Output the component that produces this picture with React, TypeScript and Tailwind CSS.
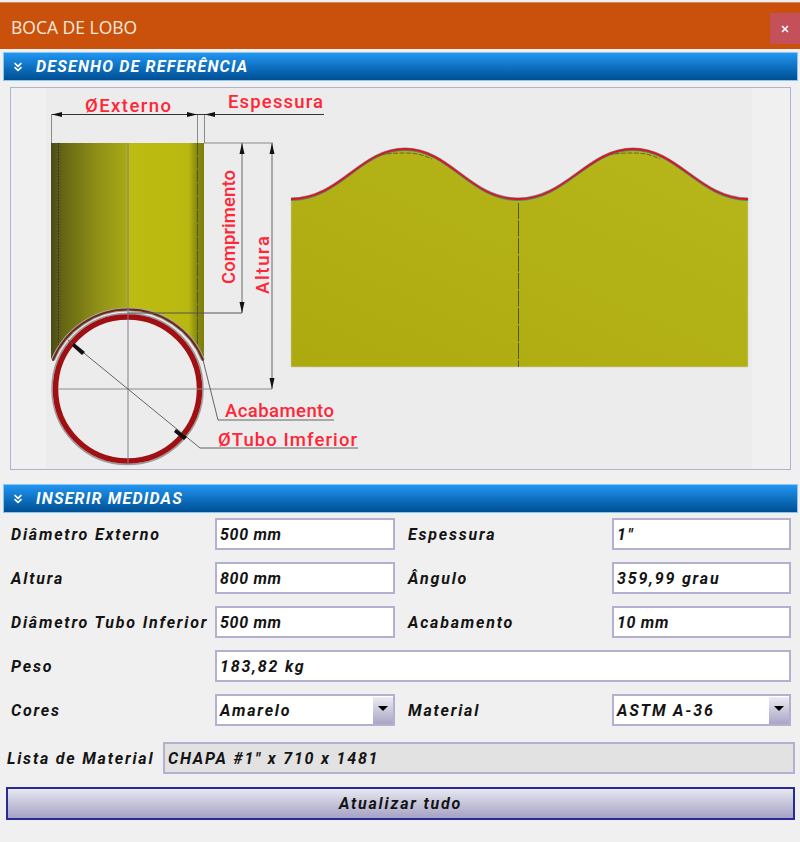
import { ChevronsDown, X } from 'lucide-react'

const labelClass =
  "font-['Roboto',sans-serif] italic font-bold text-[16px] leading-[20px] pt-[1px] tracking-[1.8px] text-[#141414] whitespace-nowrap"
const inputClass =
  "h-[32px] border-2 border-[#b4b0cf] pl-[3px] pt-[1px] flex items-center font-['Roboto',sans-serif] italic font-bold text-[16px] tracking-[1.8px] text-[#141414] whitespace-nowrap"

function SectionHeader({ title }: { title: string }) {
  return (
    <div className="mx-[3px] w-[795px] h-[29px] flex items-center border border-[#8fc4ee] bg-gradient-to-b from-[#2196f3] to-[#004f94]">
      <ChevronsDown size={14} strokeWidth={3} className="ml-[7px] text-white" />
      <span className="ml-[11px] pt-[1px] font-['Roboto',sans-serif] italic font-bold text-[16px] tracking-[1.2px] text-white whitespace-nowrap">
        {title}
      </span>
    </div>
  )
}

function Field({
  label,
  value,
  width,
  tight
}: {
  label: string
  value: string
  width: number
  tight?: boolean
}) {
  return (
    <div className="flex items-center">
      <span className={`${labelClass} w-[204px]`}>{label}</span>
      <div className={`${inputClass} bg-white`} style={{ width }}>
        <span className={tight ? 'tracking-[0.7px]' : ''}>{value}</span>
      </div>
    </div>
  )
}

function Select({ label, value, width }: { label: string; value: string; width: number }) {
  return (
    <div className="flex items-center">
      <span className={`${labelClass} w-[204px]`}>{label}</span>
      <div className={`${inputClass} bg-white justify-between pt-0`} style={{ width }}>
        <span className="pt-[1px]">{value}</span>
        <div className="w-[20px] h-full flex items-center justify-center bg-gradient-to-b from-[#ececf2] to-[#a9a6c6]">
          <div className="w-0 h-0 mb-[4px] border-x-[5px] border-x-transparent border-t-[5px] border-t-black" />
        </div>
      </div>
    </div>
  )
}

function ArrowHead({ x, y, dir }: { x: number; y: number; dir: 'l' | 'r' | 'u' | 'd' }) {
  const pts = {
    l: `${x},${y} ${x + 10},${y - 2.5} ${x + 10},${y + 2.5}`,
    r: `${x},${y} ${x - 10},${y - 2.5} ${x - 10},${y + 2.5}`,
    u: `${x},${y} ${x - 2.5},${y + 11} ${x + 2.5},${y + 11}`,
    d: `${x},${y} ${x - 2.5},${y - 11} ${x + 2.5},${y - 11}`
  }
  return <polygon points={pts[dir]} fill="#111" />
}

// Technical drawing, coordinates follow the page so they are easy to compare
function Drawing() {
  const wave =
    'M291 199 C340 199 360 149 405 149 C450 149 470 199 518 199 C566 199 588 149 633 149 C678 149 700 199 748 199'
  const red = { fontFamily: 'Roboto, sans-serif', fontWeight: 500, fill: '#ff2638', fontSize: 18.5, lengthAdjust: 'spacing' }
  return (
    <svg width={779} height={381} viewBox="11 88 779 381" className="block">
      <defs>
        <linearGradient id="cyl" x1="0" x2="1" y1="0" y2="0">
          <stop offset="0" stopColor="#4a4a18" />
          <stop offset="0.08" stopColor="#666614" />
          <stop offset="0.3" stopColor="#8f8f18" />
          <stop offset="0.49" stopColor="#a8a816" />
          <stop offset="0.5" stopColor="#bcbc12" />
          <stop offset="0.9" stopColor="#b8b810" />
          <stop offset="0.95" stopColor="#8a8a10" />
          <stop offset="1" stopColor="#7e7e10" />
        </linearGradient>
        <linearGradient id="sheet" x1="0" x2="1" y1="1" y2="0">
          <stop offset="0" stopColor="#acaa0e" />
          <stop offset="1" stopColor="#b7b61a" />
        </linearGradient>
      </defs>
      <rect x={11} y={88} width={779} height={381} fill="#f0f0f0" />
      <rect x={46} y={88} width={706} height={381} fill="#ececec" />

      {/* developed sheet */}
      <path d={`${wave} V367 H291 Z`} fill="url(#sheet)" stroke="#cfcfc0" strokeWidth={0.6} />
      <path d={wave} fill="none" stroke="#3f9a7a" strokeWidth={1} transform="translate(0 1.5)" />
      <path
        d="M380 155 C392 153 398 153 405 153 C414 153 422 154 432 159 M608 155 C620 153 626 153 633 153 C642 153 650 154 660 159"
        fill="none"
        stroke="#55551a"
        strokeWidth={0.8}
        strokeDasharray="5 1.5"
      />
      <path d={wave} fill="none" stroke="#666" strokeWidth={3} opacity={0.7} />
      <path d={wave} fill="none" stroke="#dc1426" strokeWidth={1.8} />
      <line x1={518.5} y1={203} x2={518.5} y2={367} stroke="#55551a" strokeWidth={1} strokeDasharray="16 1.5" />

      {/* cylinder */}
      <path d="M51 143 H204 V360 A 83.2 83.2 0 0 0 51 360 Z" fill="url(#cyl)" />
      <line x1={58.5} y1={143} x2={58.5} y2={345} stroke="#2e2e2e" strokeWidth={1} strokeDasharray="1.5 1.5" />
      <line x1={197.5} y1={143} x2={197.5} y2={350} stroke="#55551a" strokeWidth={1} strokeDasharray="12 1.5" />

      {/* lower tube */}
      <path d="M51 360 A 83.2 83.2 0 0 1 204 360 L204 389 H51 Z" fill="#ececec" />
      <circle cx={127.5} cy={389} r={75.5} fill="none" stroke="#9a9a9a" strokeWidth={1.5} />
      <circle cx={127.5} cy={389} r={72} fill="#ececec" stroke="#a00f12" strokeWidth={5.5} />
      <path d="M53 360 A 81 81 0 0 1 203 360" fill="none" stroke="#a8a8a0" strokeWidth={4} />
      <path d="M53 360 A 81 81 0 0 1 203 360" fill="none" stroke="#6d2a1c" strokeWidth={2} strokeLinecap="round" />
      <path d="M127.5 313 H242" fill="none" stroke="#555" strokeWidth={1} />

      {/* center lines */}
      <line x1={128} y1={143} x2={128} y2={465} stroke="#7f7f8f" strokeWidth={1} />
      <line x1={58} y1={389} x2={272} y2={389} stroke="#8a8a8a" strokeWidth={1} />

      {/* dimension lines */}
      <g stroke="#8a8a8a" strokeWidth={1} fill="none">
        <path d="M51.5 114 V143 M197.5 114 V143 M204.5 114 V143 M204 143 H273" />
        <path d="M242 143 V313 M272 143 V389" stroke="#666" />
      </g>
      <line x1={52} y1={114.5} x2={324} y2={114.5} stroke="#333" strokeWidth={1} />
      <ArrowHead x={52} y={114.5} dir="l" />
      <ArrowHead x={197} y={114.5} dir="r" />
      <ArrowHead x={205} y={114.5} dir="l" />
      <ArrowHead x={242} y={143} dir="u" />
      <ArrowHead x={242} y={313} dir="d" />
      <ArrowHead x={272} y={143} dir="u" />
      <ArrowHead x={272} y={389} dir="d" />

      {/* leaders */}
      <path d="M68 340 L200 448 H358 M203 360 L218 420 H334" fill="none" stroke="#555" strokeWidth={0.9} />
      <polygon points="74,343 85,352 82,355 72,346" fill="#111" />
      <polygon points="176,429 187,437 184,440 174,432" fill="#111" />

      {/* labels */}
      <text x={85} y={112} textLength={86} {...red}>ØExterno</text>
      <text x={228} y={108} textLength={95} {...red}>Espessura</text>
      <text transform="translate(235 284) rotate(-90)" textLength={114} {...red}>Comprimento</text>
      <text transform="translate(269 294) rotate(-90)" textLength={58} {...red}>Altura</text>
      <text x={225} y={417} textLength={109} {...red}>Acabamento</text>
      <text x={218} y={446} textLength={139} {...red}>ØTubo Imferior</text>
    </svg>
  )
}

export default function App() {
  return (
    <div className="w-[800px] h-[842px] overflow-hidden bg-[#f0f0f0] pt-[2px]">
      {/* Title bar */}
      <div className="h-[47px] flex items-start justify-between bg-[#c9510c] border-t border-[#d98a5c]">
        <span className="ml-[11px] mt-[12px] font-['Open_Sans',sans-serif] text-[17.5px] leading-[24px] text-[#f8e8de]">
          BOCA DE LOBO
        </span>
        <div className="mt-[10px] w-[30px] h-[31px] flex items-center justify-center bg-[#c4505a]">
          <X size={10} strokeWidth={4} className="text-white" />
        </div>
      </div>

      <div className="mt-[3px]">
        <SectionHeader title="DESENHO DE REFERÊNCIA" />
      </div>

      {/* Reference drawing */}
      <div className="mt-[6px] ml-[10px] w-[781px] h-[383px] border border-[#b4b0cf]">
        <Drawing />
      </div>

      <div className="mt-[14px]">
        <SectionHeader title="INSERIR MEDIDAS" />
      </div>

      {/* Measures form */}
      <div className="mt-[5px] pl-[11px] flex flex-col gap-[12px]">
        <div className="flex gap-[13px]">
          <Field label="Diâmetro Externo" value="500 mm" width={180} tight />
          <Field label="Espessura" value={'1"'} width={179} />
        </div>
        <div className="flex gap-[13px]">
          <Field label="Altura" value="800 mm" width={180} tight />
          <Field label="Ângulo" value="359,99 grau" width={179} />
        </div>
        <div className="flex gap-[13px]">
          <Field label="Diâmetro Tubo Inferior" value="500 mm" width={180} tight />
          <Field label="Acabamento" value="10 mm" width={179} tight />
        </div>
        <Field label="Peso" value="183,82 kg" width={576} />
        <div className="flex gap-[13px]">
          <Select label="Cores" value="Amarelo" width={180} />
          <Select label="Material" value="ASTM A-36" width={179} />
        </div>
      </div>

      <div className="mt-[16px] pl-[7px] flex items-center">
        <span className={`${labelClass} w-[156px]`}>Lista de Material</span>
        <div className={`${inputClass} w-[632px] bg-[#e2e2e2]`}>{'CHAPA #1" x 710 x 1481'}</div>
      </div>

      <div className={`mt-[13px] ml-[6px] w-[789px] h-[33px] flex items-center justify-center border-2 border-[#2a2a96] bg-gradient-to-b from-[#e8e8f2] to-[#a5a2c3] ${labelClass}`}>
        Atualizar tudo
      </div>
    </div>
  )
}
